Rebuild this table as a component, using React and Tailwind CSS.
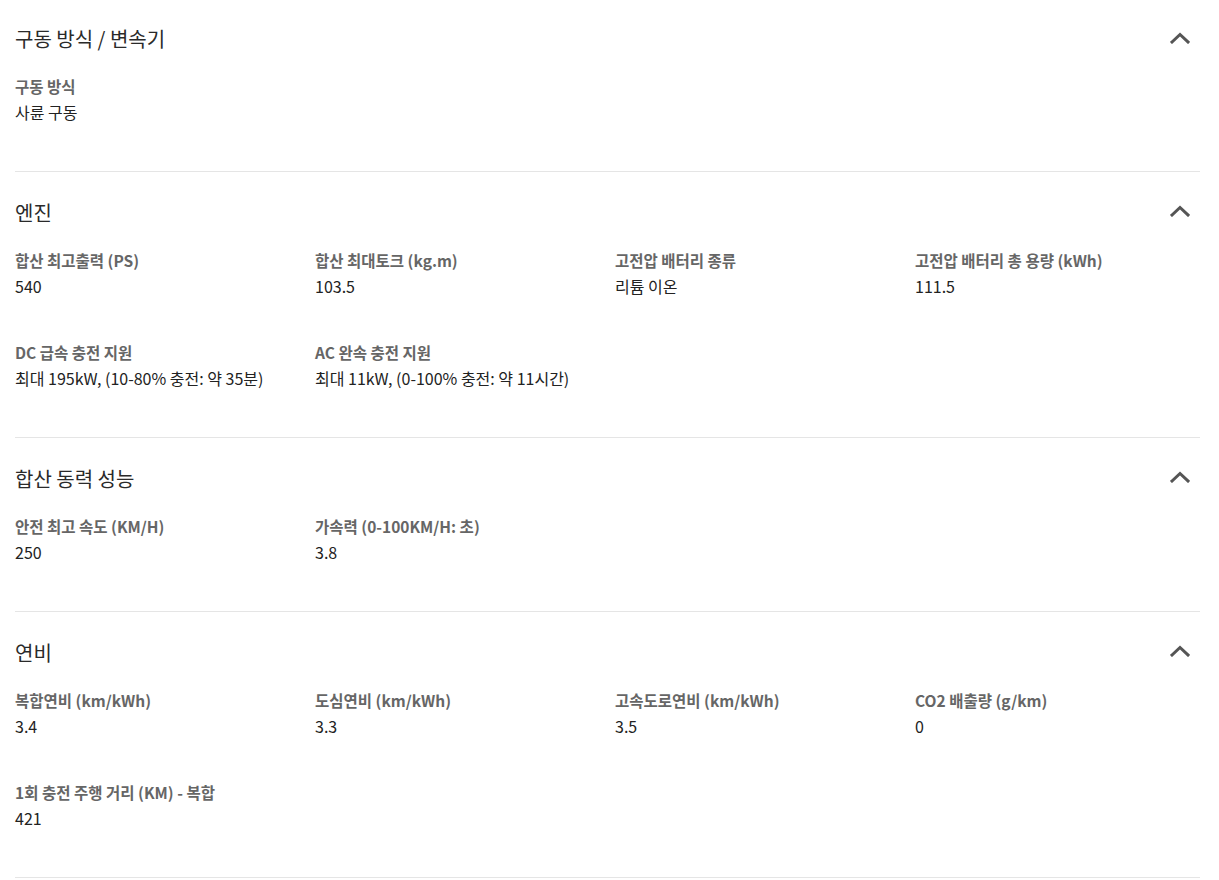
const SECTIONS = [
  {
    title: "구동 방식 / 변속기",
    items: [{ label: "구동 방식", value: "사륜 구동" }],
  },
  {
    title: "엔진",
    items: [
      { label: "합산 최고출력 (PS)", value: "540" },
      { label: "합산 최대토크 (kg.m)", value: "103.5" },
      { label: "고전압 배터리 종류", value: "리튬 이온" },
      { label: "고전압 배터리 총 용량 (kWh)", value: "111.5" },
      { label: "DC 급속 충전 지원", value: "최대 195kW, (10-80% 충전: 약 35분)" },
      { label: "AC 완속 충전 지원", value: "최대 11kW, (0-100% 충전: 약 11시간)" },
    ],
  },
  {
    title: "합산 동력 성능",
    items: [
      { label: "안전 최고 속도 (KM/H)", value: "250" },
      { label: "가속력 (0-100KM/H: 초)", value: "3.8" },
    ],
  },
  {
    title: "연비",
    items: [
      { label: "복합연비 (km/kWh)", value: "3.4" },
      { label: "도심연비 (km/kWh)", value: "3.3" },
      { label: "고속도로연비 (km/kWh)", value: "3.5" },
      { label: "CO2 배출량 (g/km)", value: "0" },
      { label: "1회 충전 주행 거리 (KM) - 복합", value: "421" },
    ],
  },
];

function Chevron() {
  return (
    <svg width="20" height="12" viewBox="0 0 20 12" className="block text-[#555]">
      <path d="M2 10 L10 2.5 L18 10" fill="none" stroke="currentColor" strokeWidth="3" strokeLinecap="square" />
    </svg>
  );
}

export default function App() {
  return (
    <div
      className="min-h-screen bg-white pl-[15px]"
      style={{ fontFamily: '"Noto Sans CJK KR", "Noto Sans", sans-serif' }}
    >
      <div className="w-[1185px]">
        {SECTIONS.map((s, i) => (
          <section
            key={s.title}
            className={`border-b border-[#e5e5e5] pb-[46px] ${i === 0 ? "pt-[23px]" : "pt-6"}`}
          >
            <div className="flex h-[30px] items-start justify-between">
              <h2
                className={`text-[20px] leading-[30px] font-normal text-[#2a2a2a] ${i === 0 ? "mt-px" : "mt-[2px]"}`}
              >
                {s.title}
              </h2>
              <div className="mr-[10px] mt-[9px]">
                <Chevron />
              </div>
            </div>
            <div
              className={`grid grid-cols-[repeat(4,300px)] gap-y-10 ${i === 0 ? "mt-5" : "mt-[21px]"}`}
            >
              {s.items.map((it) => (
                <div key={it.label}>
                  <p className="text-[15.5px] leading-[26px] font-bold text-[#666]">{it.label}</p>
                  <p className="text-[16px] leading-[26px] text-[#222]">{it.value}</p>
                </div>
              ))}
            </div>
          </section>
        ))}
      </div>
    </div>
  );
}
